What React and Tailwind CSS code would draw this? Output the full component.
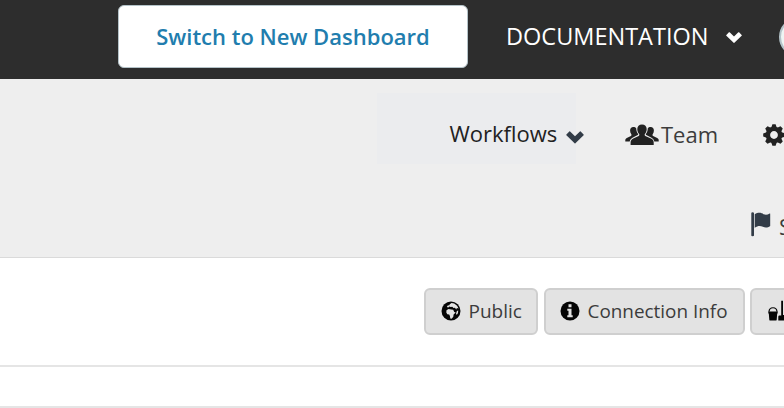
import React from "react";

function Chevron({ className }) {
  return (
    <svg viewBox="0 0 18 12" preserveAspectRatio="none" className={className} fill="currentColor" aria-hidden="true">
      <path d="M0.400 3.300 3.300 0.400Q3.700 0 4.100 0.400L9 5 13.900 0.400Q14.300 0 14.700 0.400L17.600 3.300Q18 3.700 17.600 4.100L9.400 11.700Q9 12.100 8.600 11.700L0.400 4.100Q0 3.700 0.400 3.300Z" />
    </svg>
  );
}

function GroupIcon({ className }) {
  return (
    <svg viewBox="0 0 34 22" className={className} fill="currentColor" aria-hidden="true">
      <path d="M17 .4c2.900 0 4.700 1.900 4.700 4.700 0 2-.7 3.700-1.800 4.900-.5.600-.3 1.500.4 1.900l5.700 2.700c2 1 2.700 2.100 2.700 4v2.500H5.600v-2.500c0-1.900.8-3 2.700-4l5.400-2.700c.7-.4.9-1.300.4-1.900-1.200-1.200-1.800-2.900-1.800-4.900C12.300 2.300 14.100.4 17 .4Z" />
      <path d="M8.200 3c1.500 0 2.400.4 3 1.300.1 2.300.7 4.200 1.900 5.700.2.500 0 .9-.4 1.100l-5.200 2.700c-1.500.8-2.400 1.900-2.800 3.700H.3v-1.200c0-1.100.5-1.700 1.500-2.200l4.100-2.200c.7-.4.800-1.100.4-1.700-.8-1-1.200-2.200-1.200-3.600C5.100 4.300 6.400 3 8.200 3Z" />
      <path d="M25.800 3c-1.500 0-2.400.4-3 1.300-.1 2.300-.7 4.200-1.900 5.700-.2.500 0 .9.400 1.100l5.200 2.700c1.500.8 2.400 1.900 2.800 3.700h4.400v-1.200c0-1.100-.5-1.700-1.500-2.200l-4.100-2.200c-.7-.4-.8-1.100-.4-1.700.8-1 1.200-2.200 1.200-3.600C28.900 4.300 27.600 3 25.800 3Z" />
    </svg>
  );
}

function GearIcon({ className }) {
  return (
    <svg viewBox="-11 -11 22 22" className={className} aria-hidden="true">
      <g fill="currentColor">
        <path d="M-1.600-10.800h3.200l1.400 4h-6ZM-1.600 10.800h3.200l1.400-4h-6Z" />
        <path transform="rotate(45)" d="M-1.600-10.800h3.200l1.400 4h-6ZM-1.600 10.800h3.200l1.400-4h-6Z" />
        <path transform="rotate(90)" d="M-1.600-10.800h3.200l1.400 4h-6ZM-1.600 10.800h3.200l1.400-4h-6Z" />
        <path transform="rotate(135)" d="M-1.600-10.800h3.200l1.400 4h-6ZM-1.600 10.800h3.200l1.400-4h-6Z" />
      </g>
      <circle r="6.100" fill="none" stroke="currentColor" strokeWidth="4.400" />
    </svg>
  );
}

function FlagIcon({ className }) {
  return (
    <svg viewBox="0 0 20 25" className={className} fill="currentColor" aria-hidden="true">
      <path d="M.3 1.200Q.3.300 1.600.300T3 1.200V23.500Q3 24.300 1.600 24.300T.3 23.500Z" />
      <path d="M3.700 2.300C7.700-.2 10.500 1 12.700 2.200c2 .9 3.900.5 6-.7.300-.1.500 0 .5.400v12c-2.500 2-4.900 2.100-7.300.9C9.200 13.500 7 13.500 3.700 15.700Z" />
    </svg>
  );
}

function GlobeIcon({ className }) {
  return (
    <svg viewBox="0 0 20 20" className={className} aria-hidden="true">
      <circle cx="10" cy="10" r="9.500" fill="#050505" />
      <path fill="#e3e3e3" d="M8.800 3.200 10.500 2l2.700.6 2.900 2.100 1.500 2.900-1.700-.5-.7 1.400-1.200-1.700-1.500.2-1.200-1.300-1.600.4-1.300-.7-1.100 1-1.500-.4.900-1.600 1.600-.2Z" />
      <path fill="#e3e3e3" d="m5.500 9.200 2-1.200 2.700.6 2 .2 1 2.200 1.500.5-2.100 2.100-.3 2.200-1.700 2-1.300-.4-.4-2.300-.7-1.600-1.900-.2-1-1.700.2-2.400Z" />
      <path fill="#e3e3e3" d="m15.900 9.900 1.300-.5-.2 2.500-1.300 2-.6-1.500Z" />
    </svg>
  );
}

function InfoIcon({ className }) {
  return (
    <svg viewBox="0 0 20 20" className={className} aria-hidden="true">
      <circle cx="10" cy="10" r="9.500" fill="#050505" />
      <path fill="#e3e3e3" d="M8.500 3.300h3v2.900h-3ZM7.300 7.700h4.200v6.500h1.200v2.100H7.300v-2.100h1.200V9.800H7.300Z" />
    </svg>
  );
}

function CleanIcon({ className }) {
  return (
    <svg viewBox="0 0 26 22" className={className} aria-hidden="true">
      <path fill="#050505" d="M.3 11.400h9.400v2.200h-.5l-.5 6.100q-.1.900-1 .9H2.300q-.9 0-1-.9l-.5-6.100H.3ZM13.200.8h1.800V15h10.500v5.400H10.300v-3.700q0-1 1.100-1.100h1.800Z" />
      <path fill="none" stroke="#050505" strokeWidth="1.200" d="M1 11.700c.3-5.300 7.700-5.300 8 0" />
    </svg>
  );
}

const toolButton =
  "flex h-[47px] shrink-0 items-center rounded-[6px] border-2 border-[#cfcfcf] bg-[#e3e3e3] pb-px text-[19px] text-[#3c3c3c]";

export default function App() {
  return (
    <div className="h-[408px] w-[784px] overflow-hidden bg-white font-['Open_Sans',sans-serif]">
      <header className="flex h-[79px] items-start overflow-hidden bg-[#2d2d2d] pl-[118px] pt-[5px]">
        <button className="flex h-[63px] w-[350px] shrink-0 items-center justify-center rounded-[6px] border-[1.5px] border-[#b4c3c9] bg-white pb-px text-[22px] font-semibold text-[#217dae]">
          <span className="whitespace-nowrap">Switch to New Dashboard</span>
        </button>
        <div className="ml-[38px] flex h-[63px] shrink-0 items-center text-white">
          <span className="w-[219.500px] whitespace-nowrap pb-[2px] text-[23.500px] leading-[34px]">DOCUMENTATION</span>
          <Chevron className="mt-px h-[11px] w-[16px]" />
        </div>
        <span className="ml-[37px] mt-[12px] size-[40px] shrink-0 rounded-full border-2 border-[#b4c3c9] bg-[#eef5f4]" />
      </header>

      <section className="h-[179px] overflow-hidden border-b border-[#dadada] bg-[#eeeeee] pt-[14px]">
        <nav className="flex h-[71px] pl-[377px] text-[22px] text-[#222]">
          <div className="flex w-[199px] shrink-0 bg-[#ebecee] pl-[72.500px] pt-[25px]">
            <span className="w-[116.500px] shrink-0 whitespace-nowrap leading-[30px]">Workflows</span>
            <Chevron className="mt-[13px] h-[12.500px] w-[18px] shrink-0 text-[#323c47]" />
          </div>
          <div className="ml-[49px] flex w-[138px] shrink-0 pt-[26px]">
            <GroupIcon className="mt-[5px] h-[22px] w-[34px] shrink-0" />
            <span className="ml-[2px] leading-[30px] text-[#3c3c3c]">Team</span>
          </div>
          <GearIcon className="mt-[31px] size-[22px] shrink-0" />
        </nav>
        <div className="mt-[47px] flex pl-[751px] text-[22px] text-[#3c3c3c]">
          <FlagIcon className="mt-px h-[25px] w-[20px] shrink-0 text-[#323c47]" />
          <span className="ml-[8px] leading-[30px]">Settings</span>
        </div>
      </section>

      <main>
        <div className="flex h-[109px] items-start overflow-hidden border-b-2 border-[#e5e5e5] pl-[424px] pt-[30px]">
          <button className={`${toolButton} w-[114px] pl-[15px]`}>
            <GlobeIcon className="size-[20px] shrink-0" />
            <span className="ml-[7.500px]">Public</span>
          </button>
          <button className={`${toolButton} ml-[6px] w-[201px] pl-[14px]`}>
            <InfoIcon className="size-[20px] shrink-0" />
            <span className="ml-[7.500px] whitespace-nowrap text-[18.900px]">Connection Info</span>
          </button>
          <button className={`${toolButton} ml-[5px] w-[120px] pl-[16px]`}>
            <CleanIcon className="h-[22px] w-[26px] shrink-0" />
          </button>
        </div>
        <div className="h-[41px] border-b-2 border-[#e5e5e5]" />
      </main>
    </div>
  );
}
